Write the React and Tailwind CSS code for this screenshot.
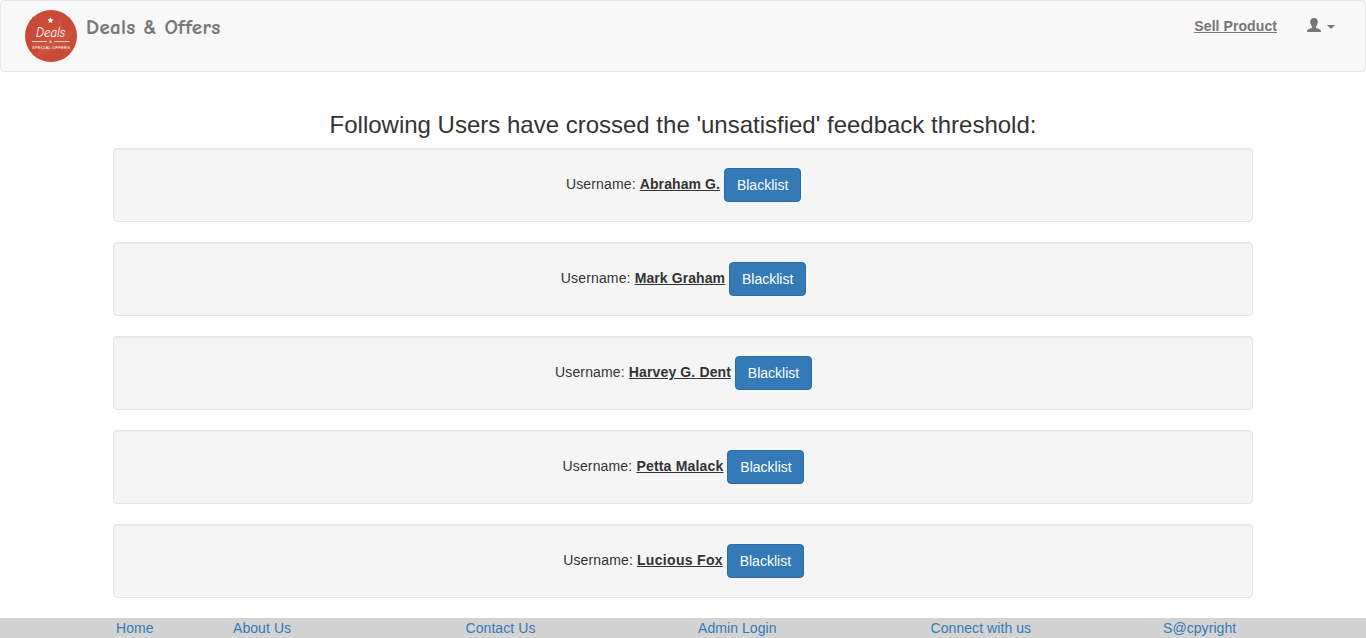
const users = [
  { name: "Abraham G.", tracking: "tracking-[0.1px]" },
  { name: "Mark Graham", tracking: "tracking-[0.09px]" },
  { name: "Harvey G. Dent", tracking: "tracking-[0.13px]" },
  { name: "Petta Malack", tracking: "tracking-[0.19px]" },
  { name: "Lucious Fox", tracking: "tracking-[0.31px]" },
];

const links = ["About Us", "Contact Us", "Admin Login", "Connect with us", "S@cpyright"];

function Logo() {
  return (
    <svg className="block h-[52px] w-[52px]" viewBox="0 0 52 52">
      <circle cx="26" cy="26" r="26" fill="#c94a36" />
      <path d="M4 34Q24 30 37 5Q33 26 51 19Q38 34 44 43Q32 34 12 47Q18 36 4 34Z" fill="#d0604d" opacity=".45" />
      <path d="M25.5 7.3l.9 2 2.1.2-1.6 1.4.5 2.1-1.9-1.1-1.9 1.1.5-2.1-1.6-1.4 2.1-.2z" fill="#fff" />
      <text x="11" y="27.3" textLength="29" lengthAdjust="spacingAndGlyphs" fill="#fff" fontFamily="Comic Neue, cursive" fontStyle="italic" fontSize="14">Deals</text>
      <path d="M7 31.5h15M29.5 31.5h15" stroke="#f6dcd7" strokeWidth=".9" />
      <text x="24.2" y="33.2" fill="#fff" fontFamily="Liberation Sans, sans-serif" fontSize="4">&amp;</text>
      <text x="7" y="38.8" textLength="38" fill="#fff" fontFamily="Liberation Sans, sans-serif" fontSize="4.2">SPECIAL OFFERS</text>
    </svg>
  );
}

function UserIcon() {
  return (
    <svg className="block h-[14px] w-[14px]" viewBox="0 0 14 14" fill="#777">
      <path d="M7 0C4.5 0 3.3 1.3 3.3 3.5C2.9 3.9 3.1 5.1 3.6 5.4C3.8 6.7 4.4 7.6 5 8.2V9.4C4.8 10.4 0 10.7 0 13.1V14H14V13.1C14 10.7 9.2 10.4 9 9.4V8.2C9.6 7.6 10.2 6.7 10.4 5.4C10.9 5.1 11.1 3.9 10.7 3.5C10.7 1.3 9.5 0 7 0Z" />
    </svg>
  );
}

export default function App() {
  return (
    <div className="flex h-[638px] flex-col overflow-hidden bg-white font-['Liberation_Sans',Arial,sans-serif] text-sm leading-5 text-[#333]">
      <nav className="flex h-[72px] shrink-0 items-start justify-between rounded border border-[#e7e7e7] bg-[#f8f8f8] pr-[30px] pl-6">
        <div className="flex pt-[9px]">
          <Logo />
          <span className="ml-[9px] pt-[7px] font-['Comic_Sans_MS','Comic_Neue','Open_Sans',sans-serif] text-[21px] leading-5 font-bold tracking-[0.3px] whitespace-nowrap text-[#777] [-webkit-text-stroke:0.2px_#777]">Deals &amp; Offers</span>
        </div>
        <div className="flex pt-[15px] text-[#777]">
          <a className="font-bold tracking-[0.08px] underline">Sell Product</a>
          <div className="ml-[30px] flex pt-[2px]">
            <UserIcon />
            <span className="mt-[7px] ml-[6px] h-1 w-2 border-x-4 border-t-4 border-x-transparent border-t-[#777]" />
          </div>
        </div>
      </nav>
      <main className="mx-auto flex w-[1140px] grow flex-col">
        <h3 className="mt-[40px] mb-[10px] text-center text-[24px] leading-[26px]">Following Users have crossed the 'unsatisfied' feedback threshold:</h3>
        <div className="flex flex-col gap-5">
          {users.map(({ name, tracking }) => (
            <div key={name} className="flex h-[74px] items-center justify-center gap-1 rounded border border-[#e3e3e3] bg-[#f5f5f5] pl-px shadow-[inset_0_1px_1px_rgba(0,0,0,0.05)]">
              <span className="pb-[2px] whitespace-nowrap">
                <span className="tracking-[0.15px]">Username: </span>
                <b className={`underline ${tracking}`}>{name}</b>
              </span>
              <button className="h-[34px] w-[77px] rounded border border-[#2e6da4] bg-[#337ab7] leading-5 text-white">Blacklist</button>
            </div>
          ))}
        </div>
      </main>
      <footer className="grid h-5 shrink-0 grid-cols-[117px_repeat(5,232.5px)] bg-[#d3d3d3] pl-[116px] tracking-[0.07px] whitespace-nowrap text-[#337ab7]">
        <a>Home</a>
        {links.map((label) => (
          <a key={label}>{label}</a>
        ))}
      </footer>
    </div>
  );
}
